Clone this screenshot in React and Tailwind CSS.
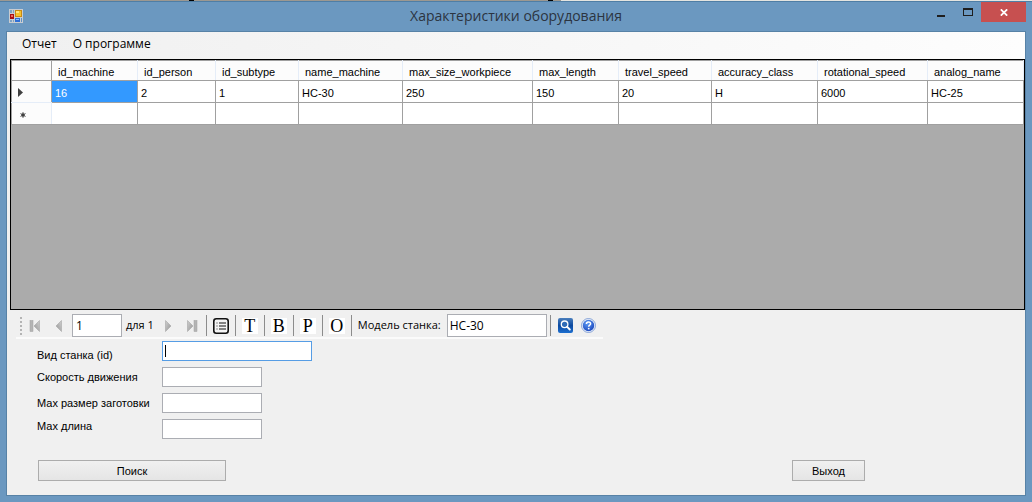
import React from "react";

const COLUMNS = [
  { name: "id_machine", value: "16", width: "w-[86px]" },
  { name: "id_person", value: "2", width: "w-[78px]" },
  { name: "id_subtype", value: "1", width: "w-[83px]" },
  { name: "name_machine", value: "HC-30", width: "w-[104px]" },
  { name: "max_size_workpiece", value: "250", width: "w-[130px]" },
  { name: "max_length", value: "150", width: "w-[86px]" },
  { name: "travel_speed", value: "20", width: "w-[93px]" },
  { name: "accuracy_class", value: "H", width: "w-[106px]" },
  { name: "rotational_speed", value: "6000", width: "w-[110px]" },
  { name: "analog_name", value: "HC-25", width: "w-[96px]" },
];

const FIELDS = [
  { id: "kind", label: "Вид станка (id)", input: "w-[150px] border-[#569de5]" },
  { id: "speed", label: "Скорость движения", input: "w-[100px] border-[#abadb3]" },
  { id: "size", label: "Мах размер заготовки", input: "w-[100px] border-[#abadb3]" },
  { id: "length", label: "Мах длина", input: "w-[100px] border-[#abadb3]" },
];

const sans = "font-['Liberation_Sans',Arial,sans-serif]";
const humanist = "font-['Open_Sans','Noto_Sans',sans-serif]";

function AppIcon() {
  return (
    <svg width="14" height="14" viewBox="0 0 14 14" aria-hidden="true">
      <rect width="14" height="14" fill="#c9ccd0" />
      <path d="M1 1h4v3H1zM1 11h4v2H1z" fill="#7da3c6" />
      <path d="M3.5 1v3M3.5 11v2" stroke="#c9ccd0" />
      <rect x="1" y="5" width="4" height="5" fill="#a90f14" />
      <rect x="2" y="6" width="2" height="2" fill="#ee6a5c" />
      <rect x="6" y="1" width="7" height="7" fill="#c88a12" />
      <rect x="7" y="2" width="5" height="5" fill="#f6c22d" />
      <rect x="7" y="2" width="3" height="2" fill="#ffe482" />
      <rect x="6" y="9" width="5" height="4" fill="#2f6fd6" />
      <rect x="7" y="10" width="3" height="1" fill="#8fc0ff" />
      <rect x="12" y="9" width="1" height="4" fill="#5c8fc4" />
    </svg>
  );
}

function NavIcon({ direction, bar }) {
  return (
    <svg
      width="12"
      height="12"
      viewBox="0 0 12 12"
      aria-hidden="true"
      className={direction === "back" ? "-scale-x-100" : ""}
    >
      <defs>
        <linearGradient id="navFill" x1="0" y1="0" x2="1" y2="1">
          <stop offset="0" stopColor="#cfcfcf" />
          <stop offset="1" stopColor="#959595" />
        </linearGradient>
      </defs>
      <path d={bar ? "M1.5 0.5 7 6 1.5 11.5z" : "M3.5 0.5 9 6 3.5 11.5z"} fill="url(#navFill)" stroke="#a6a6a6" strokeWidth=".6" />
      {bar && <rect x="8" y=".5" width="3" height="11" fill="#b4b4b4" stroke="#a0a0a0" strokeWidth=".5" />}
    </svg>
  );
}

function ListIcon() {
  return (
    <svg width="16" height="16" viewBox="0 0 16 16" aria-hidden="true">
      <rect x=".8" y=".8" width="14.4" height="14.4" rx="2.5" fill="#f4f4f4" stroke="#111" strokeWidth="1.6" />
      <path d="M6 5h7M6 8h7M6 11h7" stroke="#111" strokeWidth="1.2" />
      <path d="M3.2 5h1.6M3.2 8h1.6M3.2 11h1.6" stroke="#777" strokeWidth="1.2" />
    </svg>
  );
}

function SearchIcon() {
  return (
    <svg width="15" height="15" viewBox="0 0 15 15" aria-hidden="true">
      <defs>
        <linearGradient id="searchFill" x1="0" y1="0" x2="0" y2="1">
          <stop offset="0" stopColor="#4a7fbd" />
          <stop offset=".5" stopColor="#0c4aa0" />
          <stop offset="1" stopColor="#1d6fd0" />
        </linearGradient>
      </defs>
      <rect width="15" height="15" rx="2" fill="url(#searchFill)" />
      <circle cx="6.6" cy="6.3" r="3.3" fill="#2f6cb8" stroke="#fff" strokeWidth="1.3" />
      <path d="m9.2 8.9 2.6 2.6" stroke="#fff" strokeWidth="2" strokeLinecap="round" />
    </svg>
  );
}

function HelpIcon() {
  return (
    <svg width="15" height="15" viewBox="0 0 15 15" aria-hidden="true">
      <defs>
        <radialGradient id="helpFill" cx=".4" cy=".3" r=".8">
          <stop offset="0" stopColor="#5f9cf5" />
          <stop offset="1" stopColor="#1440b8" />
        </radialGradient>
      </defs>
      <circle cx="7.5" cy="7.5" r="7" fill="#eef3fc" stroke="#6f92cf" strokeWidth=".8" />
      <circle cx="7.5" cy="7.5" r="5.7" fill="url(#helpFill)" />
      <path d="M5.4 6c0-1.4 1-2.1 2.1-2.1s2.1.7 2.1 1.8c0 1.5-1.9 1.5-1.9 3" fill="none" stroke="#fff" strokeWidth="1.5" />
      <rect x="6.9" y="9.9" width="1.6" height="1.5" fill="#fff" />
    </svg>
  );
}

function Separator() {
  return <span className="h-[21px] w-px shrink-0 bg-[#8c8c8c]" />;
}

function LetterButton({ children }) {
  return (
    <button
      type="button"
      className="flex h-4 w-4 items-center justify-center bg-white font-['Liberation_Serif','Times_New_Roman',serif] text-[18px] leading-4 text-black"
    >
      {children}
    </button>
  );
}

function TitleBar() {
  return (
    <header className="grid h-[29px] grid-cols-[1fr_auto_1fr] items-start">
      <span className="pt-[7px] pl-[3px]">
        <AppIcon />
      </span>
      <h1 className={`${humanist} pt-[3px] text-[14px] leading-[22px] text-[#2b3440]`}>
        Характеристики оборудования
      </h1>
      <div className="flex justify-end">
        <button type="button" aria-label="Свернуть" className="flex h-5 w-[27px] items-center justify-center">
          <svg width="8" height="12" aria-hidden="true">
            <path d="M0 9h8v2H0z" fill="#1e1e1e" />
          </svg>
        </button>
        <button type="button" aria-label="Развернуть" className="flex h-5 w-[27px] items-center justify-center">
          <svg width="10" height="8" aria-hidden="true">
            <path d="M0 0h10v8H0zM1 2v5h8V2z" fill="#1e1e1e" fillRule="evenodd" />
          </svg>
        </button>
        <button type="button" aria-label="Закрыть" className="flex h-5 w-[45px] items-center justify-center bg-[#c75050]">
          <svg width="8" height="7" viewBox="0 0 8 7" aria-hidden="true">
            <path d="M.8.3 7.2 6.7M7.2.3.8 6.7" stroke="#fff" strokeWidth="1.7" />
          </svg>
        </button>
      </div>
    </header>
  );
}

function DataGrid() {
  return (
    <div className={`ml-[3px] h-[251px] overflow-hidden border border-black bg-[#ababab] text-[11px] leading-4 ${sans}`}>
      <table className="w-full table-fixed border-collapse border border-[#a0a0a0]">
        <thead>
          <tr className="h-5 bg-[#fcfcfc]">
            <th aria-label="Строка" className="w-10 border-r border-b border-[#a0a0a0]" />
            {COLUMNS.map((c) => (
              <th
                key={c.name}
                className={`${c.width} border-r border-b border-r-[#e5edf8] border-b-[#a0a0a0] pt-[2px] pl-[6px] text-left font-normal whitespace-nowrap`}
              >
                {c.name}
              </th>
            ))}
          </tr>
        </thead>
        <tbody>
          <tr className="h-[22px] bg-white">
            <td className="border-r border-b border-r-[#a0a0a0] border-b-[#e5edf8] bg-[#fcfcfc] pt-[2px] pl-[6px]">
              <svg width="5" height="9" aria-hidden="true">
                <path d="M0 0 5 4.5 0 9z" fill="#404040" />
              </svg>
            </td>
            {COLUMNS.map((c, i) => (
              <td
                key={c.name}
                className={`border border-[#a0a0a0] pt-[2px] pl-[3px] ${i === 0 ? "bg-[#3399ff] text-white" : ""}`}
              >
                {c.value}
              </td>
            ))}
          </tr>
          <tr className="h-[22px] bg-white">
            <td className="border-r border-b border-r-[#e5edf8] border-b-[#a0a0a0] bg-[#fcfcfc] pt-[2px] pl-2">
              <svg width="6" height="6" viewBox="0 0 6 6" aria-hidden="true">
                <path d="M3 0v6M.4 1.5l5.2 3M5.6 1.5l-5.2 3" fill="none" stroke="#6a6a6a" strokeWidth="1" />
                <circle cx="3" cy="3" r="1.8" fill="#404040" />
              </svg>
            </td>
            {COLUMNS.map((c) => (
              <td key={c.name} className="border border-[#a0a0a0]" />
            ))}
          </tr>
        </tbody>
      </table>
    </div>
  );
}

function Toolbar() {
  return (
    <div
      className={`ml-[9px] flex h-[29px] w-fit items-center border-b-2 border-[#fbfbfb] pt-1 pr-[7px] pl-1 text-[11px] text-black ${humanist}`}
    >
      <svg width="2" height="18" aria-hidden="true">
        <path d="M1 0v18" stroke="#b4b4b4" strokeWidth="2" strokeDasharray="2 2" />
      </svg>
      <button type="button" aria-label="В начало" className="ml-[7px]">
        <NavIcon direction="back" bar />
      </button>
      <button type="button" aria-label="Назад" className="ml-3">
        <NavIcon direction="back" />
      </button>
      <input
        aria-label="Текущая запись"
        defaultValue="1"
        className="ml-[7px] h-[23px] w-[50px] border border-[#abadb3] bg-white px-[3px] text-[12px] outline-none"
      />
      <span className="ml-1 whitespace-nowrap">для 1</span>
      <button type="button" aria-label="Вперёд" className="ml-2">
        <NavIcon />
      </button>
      <button type="button" aria-label="В конец" className="ml-3">
        <NavIcon bar />
      </button>
      <div className="ml-2 flex items-center gap-[6px]">
        <Separator />
        <button type="button" aria-label="Список">
          <ListIcon />
        </button>
        <Separator />
        <LetterButton>T</LetterButton>
        <Separator />
        <LetterButton>B</LetterButton>
        <Separator />
        <LetterButton>P</LetterButton>
        <Separator />
        <LetterButton>O</LetterButton>
        <Separator />
      </div>
      <label htmlFor="model" className="ml-[6px] whitespace-nowrap">
        Модель станка:
      </label>
      <input
        id="model"
        defaultValue="НС-30"
        className="ml-[6px] mr-[3px] h-[23px] w-[100px] border border-[#abadb3] bg-white px-[2px] text-[12px] outline-none"
      />
      <Separator />
      <button type="button" aria-label="Найти" className="ml-[7px]">
        <SearchIcon />
      </button>
      <button type="button" aria-label="Справка" className="ml-2">
        <HelpIcon />
      </button>
    </div>
  );
}

function SearchForm() {
  return (
    <form className={`flex flex-col pt-[2px] text-[11px] text-black ${sans}`} onSubmit={(e) => e.preventDefault()}>
      <div className="flex pl-[30px]">
        <div className="grid w-[125px] grid-rows-[28px_16px_36px_10px] items-center">
          {FIELDS.map((f) => (
            <label key={f.id} htmlFor={f.id} className="leading-[14px] whitespace-nowrap">
              {f.label}
            </label>
          ))}
        </div>
        <div className="flex flex-col gap-[6px]">
          {FIELDS.map((f, i) => (
            <div key={f.id} className="relative flex">
              <input id={f.id} className={`h-5 border bg-white px-1 outline-none ${f.input}`} />
              {i === 0 && <span className="absolute top-1 left-[3px] h-3 w-px bg-black" />}
            </div>
          ))}
        </div>
      </div>
      <div className="mt-[21px] flex justify-between pr-[160px] pl-[31px]">
        <button
          type="submit"
          className="h-[21px] w-[188px] border border-[#acacac] bg-linear-to-b from-[#f0f0f0] to-[#e5e5e5] pt-[2px]"
        >
          Поиск
        </button>
        <button
          type="button"
          className="h-[21px] w-[73px] border border-[#acacac] bg-linear-to-b from-[#f0f0f0] to-[#e5e5e5] pt-[2px]"
        >
          Выход
        </button>
      </div>
    </form>
  );
}

export default function App() {
  return (
    <div className="flex min-h-screen flex-col bg-[#6b98c0]">
      <div className="flex h-px bg-[#9c9891]">
        <span className="ml-[189px] w-[5px] bg-black" />
        <span className="ml-[354px] w-[5px] bg-black" />
        <span className="ml-2 flex-1 bg-[#e4e4e0]" />
      </div>
      <div className="flex flex-1 flex-col border-t border-[#4f7ea5] px-[6px] pb-[6px]">
        <TitleBar />
        <main className="flex flex-1 flex-col border border-[#5782a6] bg-[#f0f0f0]">
          <nav
            className={`flex h-[27px] items-center gap-4 bg-linear-to-r from-[#f0f0f0] to-[#fdfdfd] pb-[3px] pl-[15px] text-[12px] text-black ${humanist}`}
          >
            <a href="#report">Отчет</a>
            <a href="#about">О программе</a>
          </nav>
          <DataGrid />
          <Toolbar />
          <SearchForm />
        </main>
      </div>
    </div>
  );
}
